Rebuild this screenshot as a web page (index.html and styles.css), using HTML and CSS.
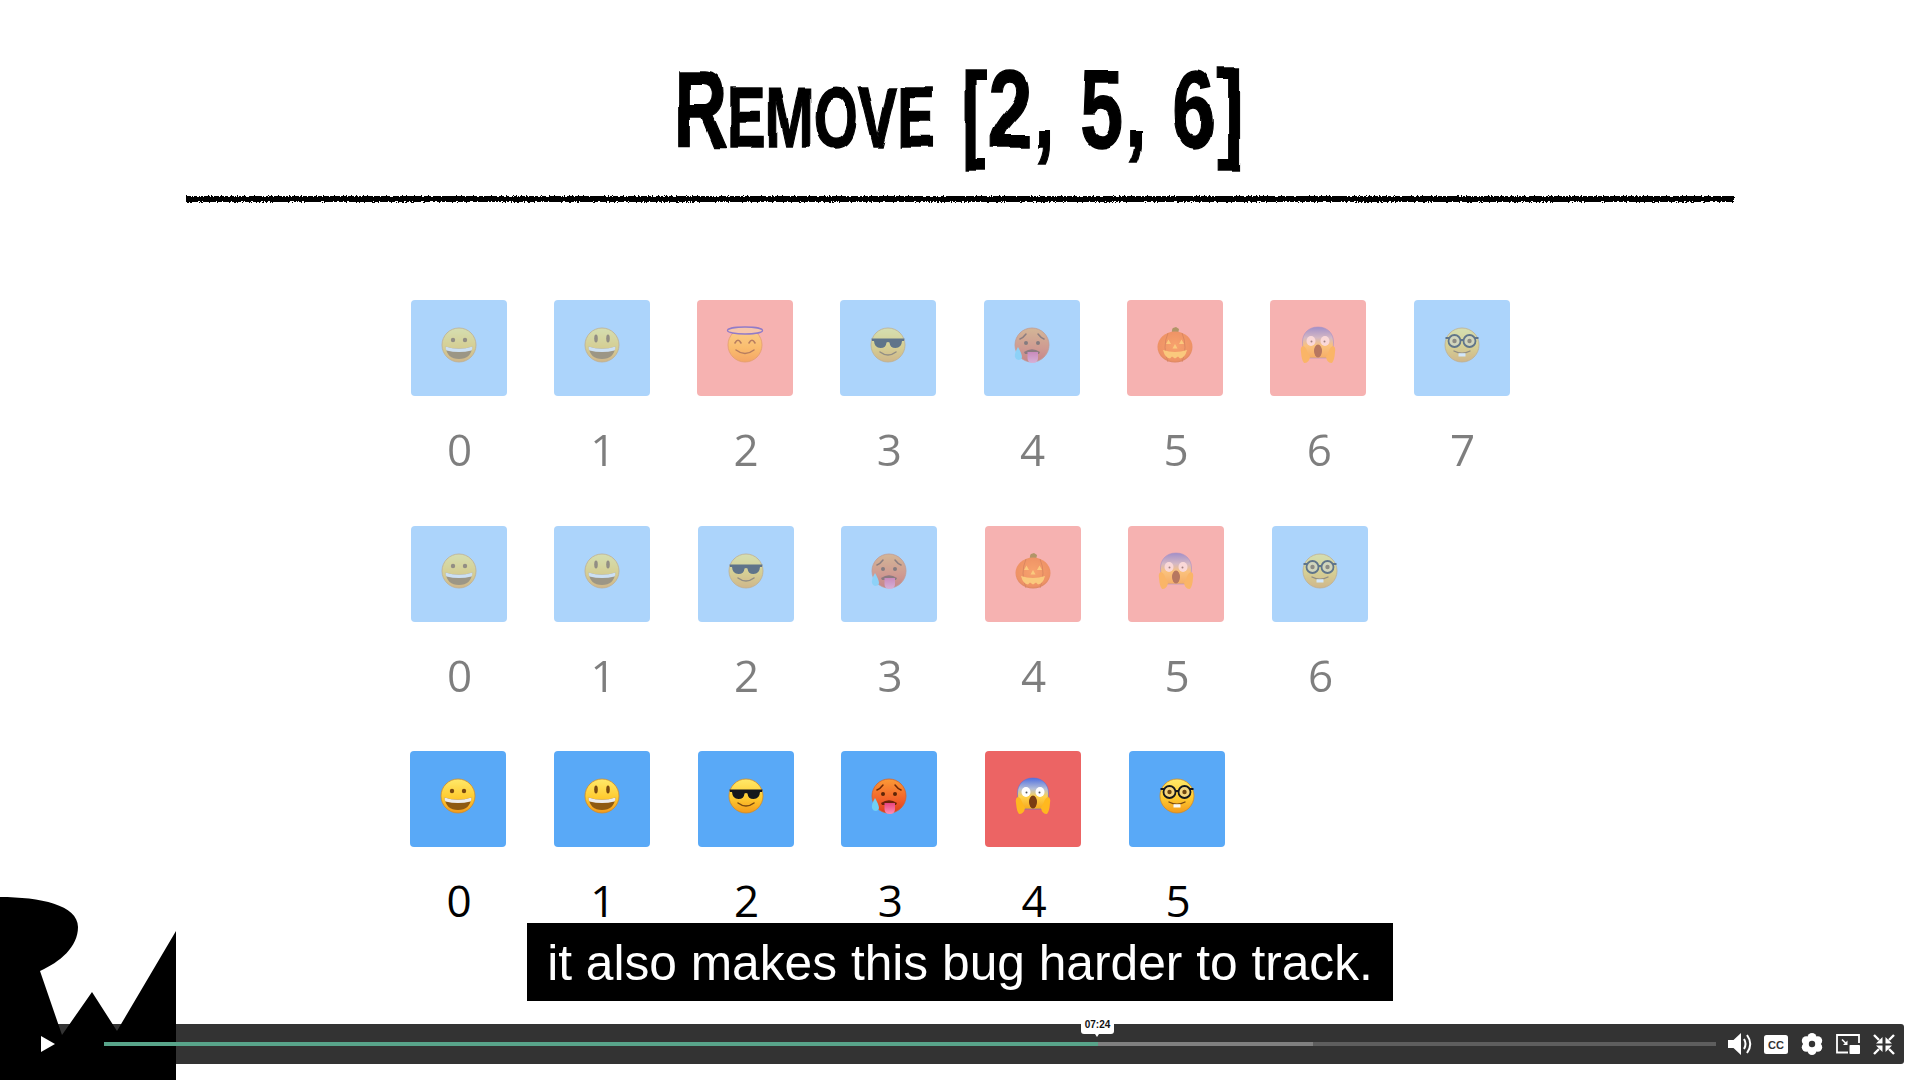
FILE: index.html
```html
<!DOCTYPE html>
<html lang="en">
<head>
<meta charset="utf-8">
<title>Remove [2, 5, 6]</title>
<link rel="stylesheet" href="styles.css">
</head>
<body>
<svg class="defs" aria-hidden="true">
  <defs>
    <filter id="wobble" x="-5%" y="-10%" width="110%" height="120%">
      <feTurbulence type="fractalNoise" baseFrequency="0.02" numOctaves="1" seed="4"/>
      <feDisplacementMap in="SourceGraphic" scale="7"/>
      <feGaussianBlur stdDeviation="0.6"/>
    </filter>
    <filter id="rough" x="-1%" y="-100%" width="102%" height="300%">
      <feTurbulence type="fractalNoise" baseFrequency="0.6" numOctaves="2" seed="7"/>
      <feDisplacementMap in="SourceGraphic" scale="4"/>
    </filter>
    <linearGradient id="gFace" x1="0" y1="0" x2="0" y2="1">
      <stop offset="0" stop-color="#ffe96a"/><stop offset=".55" stop-color="#ffcb30"/><stop offset="1" stop-color="#f39a1c"/>
    </linearGradient>
    <linearGradient id="gHot" x1="0" y1="0" x2="0" y2="1">
      <stop offset="0" stop-color="#fb9a35"/><stop offset=".6" stop-color="#f2622a"/><stop offset="1" stop-color="#dd3a1c"/>
    </linearGradient>
    <linearGradient id="gScream" x1="0" y1="0" x2="0" y2="1">
      <stop offset="0" stop-color="#4f6fe0"/><stop offset=".35" stop-color="#b5bfd8"/><stop offset=".6" stop-color="#ffd24a"/><stop offset="1" stop-color="#f6a91f"/>
    </linearGradient>
    <radialGradient id="gPump" cx=".5" cy=".45" r=".6">
      <stop offset="0" stop-color="#f9942c"/><stop offset=".8" stop-color="#e8741c"/><stop offset="1" stop-color="#a84e16"/>
    </radialGradient>
    <linearGradient id="gTongue" x1="0" y1="0" x2="0" y2="1">
      <stop offset="0" stop-color="#e8447f"/><stop offset="1" stop-color="#ff8fb5"/>
    </linearGradient>

    <circle id="fc" cx="18" cy="18" r="17" fill="url(#gFace)" stroke="#cf8a2a" stroke-width=".8"/>
    <g id="e-grin">
      <use href="#fc"/>
      <circle cx="12" cy="13" r="2.2" fill="#7a4a10"/><circle cx="24" cy="13" r="2.2" fill="#7a4a10"/>
      <path d="M4.500 19.500Q18 24 31.500 19.500Q30 32 18 32Q6 32 4.500 19.500Z" fill="#8e5a12"/>
      <path d="M4.500 19.500Q18 24 31.500 19.500Q31.500 22 30.500 23.500Q18 26.500 5.500 23.500Q4.500 22 4.500 19.500Z" fill="#ececec"/>
    </g>
    <g id="e-smile">
      <use href="#fc"/>
      <ellipse cx="12" cy="11.500" rx="1.800" ry="4" fill="#7a4a10"/><ellipse cx="24" cy="11.500" rx="1.800" ry="4" fill="#7a4a10"/>
      <path d="M4.500 19.500Q18 24 31.500 19.500Q30 32 18 32Q6 32 4.500 19.500Z" fill="#8e5a12"/>
      <path d="M4.500 19.500Q18 24 31.500 19.500Q31.500 22 30.500 23.500Q18 26.500 5.500 23.500Q4.500 22 4.500 19.500Z" fill="#ececec"/>
    </g>
    <g id="e-halo">
      <use href="#fc"/>
      <ellipse cx="18" cy="3.500" rx="17.500" ry="3.500" fill="#f6d9a8" stroke="#2f45e0" stroke-width="1.400"/>
      <path d="M8 16Q11 10.500 14 16M22 16Q25 10.500 28 16" fill="none" stroke="#7a4a10" stroke-width="1.600" stroke-linecap="round"/>
      <path d="M9 23Q18 30 27 23" fill="none" stroke="#7a4a10" stroke-width="1.500" stroke-linecap="round"/>
    </g>
    <g id="e-cool">
      <use href="#fc"/>
      <path d="M1.500 11.500H34.500L34 14H32Q31.500 21 25.500 21Q20 21 19.500 15.500Q18 14.500 16.500 15.500Q16 21 10.500 21Q4.500 21 4 14H2Z" fill="#15171c"/>
      <path d="M10 25Q18 31 26 25" fill="none" stroke="#7a4a10" stroke-width="1.500" stroke-linecap="round"/>
    </g>
    <g id="e-hot">
      <circle cx="18" cy="18" r="17" fill="url(#gHot)" stroke="#d4622c" stroke-width=".8"/>
      <path d="M6 12Q9 11 12 7M30 12Q27 11 24 7" fill="none" stroke="#6e2a08" stroke-width="1.500" stroke-linecap="round"/>
      <circle cx="12" cy="16" r="2" fill="#5e2506"/><circle cx="24" cy="16" r="2" fill="#5e2506"/>
      <path d="M10 25Q18 19.500 26 25L25 27H11Z" fill="#6e2208"/>
      <path d="M13.500 25H24V31Q24 36 18.800 36Q13.500 36 13.500 31Z" fill="url(#gTongue)"/>
      <path d="M4 20Q0 27 1 30Q2 33 4.500 33Q7.500 33 8 30Q8 27 4 20Z" fill="#6fd0f5"/>
    </g>
    <g id="e-pump">
      <path d="M15 7Q14.500 2 16 1L19 0L22 2L21 7Z" fill="#6f7a20"/>
      <ellipse cx="18" cy="20" rx="17.500" ry="15.500" fill="url(#gPump)"/>
      <path d="M11 6Q5 20 11 35M25 6Q31 20 25 35" fill="none" stroke="#b5540f" stroke-width=".8"/>
      <path d="M9 17L11.500 12.500L14 17ZM22 17L24.500 12.500L27 17ZM18 17L20.500 21.500H15.500Z" fill="#ffe04a"/>
      <path d="M6 23Q18 27 30 23Q28 31 23 31.500L21 29.500L18 31.500L15 29.500L13 31.500Q8 31 6 23Z" fill="#ffe04a"/>
    </g>
    <g id="e-scream">
      <path d="M18 0C8 0 2.500 7 2.500 15C2.500 22 4 27 7 31H29C32 27 33.500 22 33.500 15C33.500 7 28 0 18 0Z" fill="url(#gScream)" stroke="#5d6fd8" stroke-width=".6"/>
      <ellipse cx="11" cy="14" rx="4.500" ry="5" fill="#fff"/><ellipse cx="25" cy="14" rx="4.500" ry="5" fill="#fff"/>
      <circle cx="11.500" cy="14.500" r="1" fill="#555"/><circle cx="24.500" cy="14.500" r="1" fill="#555"/>
      <ellipse cx="18" cy="24" rx="4" ry="6.500" fill="#7a3d12"/>
      <path d="M1 25Q0 20 3 19Q6 20 7 24L10 30Q9 36 4 36Q1.500 33 1 25Z" fill="#ffb81f"/>
      <path d="M35 25Q36 20 33 19Q30 20 29 24L26 30Q27 36 32 36Q34.500 33 35 25Z" fill="#ffb81f"/>
    </g>
    <g id="e-nerd">
      <use href="#fc"/>
      <circle cx="10.500" cy="14" r="6" fill="#f6d67e" stroke="#16181c" stroke-width="1.800"/>
      <circle cx="25.500" cy="14" r="6" fill="#f6d67e" stroke="#16181c" stroke-width="1.800"/>
      <path d="M1.500 11H5M31 11H34.500M16.500 13H19.500" stroke="#16181c" stroke-width="1.800" fill="none"/>
      <circle cx="10.500" cy="14" r="2.200" fill="#6e4510"/><circle cx="25.500" cy="14" r="2.200" fill="#6e4510"/>
      <path d="M10 24Q18 28.500 26 24" fill="none" stroke="#7a4a10" stroke-width="1.400" stroke-linecap="round"/>
      <path d="M14.500 26.200H21.500V29.500H14.500Z" fill="#fafafa"/>
    </g>
  </defs>
</svg>

<main class="slide">
  <header class="head">
    <h1 class="title"><span class="low-wrap">R<span class="low">emove</span></span> <span class="nums">[2, 5, 6]</span></h1>
    <div class="rule"></div>
  </header>

  <section class="rows">
    <div class="row row-a faded">
      <div class="item"><div class="tile blue"><svg class="emoji" viewBox="0 0 36 36"><use href="#e-grin"/></svg></div><div class="num">0</div></div>
      <div class="item"><div class="tile blue"><svg class="emoji" viewBox="0 0 36 36"><use href="#e-smile"/></svg></div><div class="num">1</div></div>
      <div class="item"><div class="tile red"><svg class="emoji" viewBox="0 0 36 36"><use href="#e-halo"/></svg></div><div class="num">2</div></div>
      <div class="item"><div class="tile blue"><svg class="emoji" viewBox="0 0 36 36"><use href="#e-cool"/></svg></div><div class="num">3</div></div>
      <div class="item"><div class="tile blue"><svg class="emoji" viewBox="0 0 36 36"><use href="#e-hot"/></svg></div><div class="num">4</div></div>
      <div class="item"><div class="tile red"><svg class="emoji" viewBox="0 0 36 36"><use href="#e-pump"/></svg></div><div class="num">5</div></div>
      <div class="item"><div class="tile red"><svg class="emoji" viewBox="0 0 36 36"><use href="#e-scream"/></svg></div><div class="num">6</div></div>
      <div class="item"><div class="tile blue"><svg class="emoji" viewBox="0 0 36 36"><use href="#e-nerd"/></svg></div><div class="num">7</div></div>
    </div>
    <div class="row row-b faded">
      <div class="item"><div class="tile blue"><svg class="emoji" viewBox="0 0 36 36"><use href="#e-grin"/></svg></div><div class="num">0</div></div>
      <div class="item"><div class="tile blue"><svg class="emoji" viewBox="0 0 36 36"><use href="#e-smile"/></svg></div><div class="num">1</div></div>
      <div class="item"><div class="tile blue"><svg class="emoji" viewBox="0 0 36 36"><use href="#e-cool"/></svg></div><div class="num">2</div></div>
      <div class="item"><div class="tile blue"><svg class="emoji" viewBox="0 0 36 36"><use href="#e-hot"/></svg></div><div class="num">3</div></div>
      <div class="item"><div class="tile red"><svg class="emoji" viewBox="0 0 36 36"><use href="#e-pump"/></svg></div><div class="num">4</div></div>
      <div class="item"><div class="tile red"><svg class="emoji" viewBox="0 0 36 36"><use href="#e-scream"/></svg></div><div class="num">5</div></div>
      <div class="item"><div class="tile blue"><svg class="emoji" viewBox="0 0 36 36"><use href="#e-nerd"/></svg></div><div class="num">6</div></div>
    </div>
    <div class="row row-c">
      <div class="item"><div class="tile blue"><svg class="emoji" viewBox="0 0 36 36"><use href="#e-grin"/></svg></div><div class="num">0</div></div>
      <div class="item"><div class="tile blue"><svg class="emoji" viewBox="0 0 36 36"><use href="#e-smile"/></svg></div><div class="num">1</div></div>
      <div class="item"><div class="tile blue"><svg class="emoji" viewBox="0 0 36 36"><use href="#e-cool"/></svg></div><div class="num">2</div></div>
      <div class="item"><div class="tile blue"><svg class="emoji" viewBox="0 0 36 36"><use href="#e-hot"/></svg></div><div class="num">3</div></div>
      <div class="item"><div class="tile red"><svg class="emoji" viewBox="0 0 36 36"><use href="#e-scream"/></svg></div><div class="num">4</div></div>
      <div class="item"><div class="tile blue"><svg class="emoji" viewBox="0 0 36 36"><use href="#e-nerd"/></svg></div><div class="num">5</div></div>
    </div>
  </section>

  <svg class="logo" viewBox="0 0 176 183" aria-hidden="true">
    <path d="M0 0C40 0 78 8 78 30C78 50 60 65 40 74L62 138L92 95L117 134L176 34V183H0Z"/>
  </svg>

  <p class="caption">it also makes this bug harder to track.</p>

  <div class="player">
    <button class="play" aria-label="Play"></button>
    <div class="track">
      <div class="buffered"></div>
      <div class="played"></div>
      <div class="tip">07:24</div>
    </div>
    <div class="icons">
      <svg class="ic ic-vol" viewBox="0 0 24 22"><path d="M0 7H5.500L13 0V22L5.500 15H0Z" fill="#fff"/><path d="M16 6Q19 11 16 16M19 2Q25.500 11 19 20" fill="none" stroke="#fff" stroke-width="2"/></svg>
      <svg class="ic ic-cc" viewBox="0 0 24 19"><rect width="24" height="19" rx="2.500" fill="#fff"/><text x="12" y="13.500" text-anchor="middle" class="cc-text">CC</text></svg>
      <svg class="ic ic-gear" viewBox="0 0 22 22"><g fill="#fff"><circle cx="11" cy="4.500" r="4.500"/><circle cx="11" cy="17.500" r="4.500"/><circle cx="5.300" cy="7.800" r="4.500"/><circle cx="16.700" cy="7.800" r="4.500"/><circle cx="5.300" cy="14.200" r="4.500"/><circle cx="16.700" cy="14.200" r="4.500"/></g><circle cx="11" cy="11" r="3.200" fill="#333"/></svg>
      <svg class="ic ic-pip" viewBox="0 0 24 20"><path d="M12 18.500H1V1H23V9" fill="none" stroke="#fff" stroke-width="1.800"/><rect x="13.500" y="11" width="10.500" height="9" rx=".8" fill="#fff"/><path d="M6 5.500L10 9.500" stroke="#fff" stroke-width="1.600"/><path d="M11.500 6.500V11H7Z" fill="#fff"/></svg>
      <svg class="ic ic-col" viewBox="0 0 22 21"><g fill="#fff"><path d="M9.500 9.500V3L3 9.500ZM12.500 9.500V3L19 9.500ZM9.500 11.500V18L3 11.500ZM12.500 11.500V18L19 11.500Z"/></g><path d="M1 1L6 6M21 1L16 6M1 20L6 15M21 20L16 15" stroke="#fff" stroke-width="2.400"/></svg>
    </div>
  </div>
</main>
</body>
</html>
```
FILE: styles.css
```css
html, body {
  margin: 0;
  padding: 0;
  background: #fff;
}

.defs {
  display: block;
  width: 0;
  height: 0;
}

.slide {
  position: relative;
  width: 1920px;
  height: 1080px;
  overflow: hidden;
  background: #fff;
  font-family: "Open Sans", sans-serif;
}

.head {
  display: flex;
  flex-direction: column;
  align-items: center;
  padding-top: 44px;
}

.title {
  margin: 0 12px 0 0;
  height: 152px;
  font-family: "Liberation Sans", sans-serif;
  font-size: 110px;
  font-weight: 700;
  line-height: 130px;
  color: #000;
  white-space: pre;
  word-spacing: 5px;
  -webkit-text-stroke: 1.5px #000;
  transform: scaleX(0.7);
  filter: url(#wobble);
}

.low-wrap {
  display: inline-block;
  transform: scaleX(0.96);
  transform-origin: right center;
}

.low {
  font-size: 86px;
  text-transform: uppercase;
}

.nums {
  word-spacing: 0;
  letter-spacing: 3px;
}

.rule {
  width: 1548px;
  height: 6px;
  background: #000;
  filter: url(#rough);
}

.rows {
  display: flex;
  flex-direction: column;
  gap: 46.5px;
  padding-top: 98px;
}

.row {
  display: flex;
}

.row-a {
  gap: 47.3px;
  padding-left: 410.5px;
}

.row-b {
  gap: 47.5px;
  padding-left: 410.5px;
}

.row-c {
  gap: 47.8px;
  padding-left: 410px;
}

.item {
  display: flex;
  flex-direction: column;
  align-items: center;
  width: 96px;
}

.tile {
  display: flex;
  align-items: center;
  justify-content: center;
  width: 96px;
  height: 96px;
  border-radius: 4px;
}

.blue {
  background: #59a9f7;
}

.red {
  background: #ec6464;
}

.faded .blue {
  background: #acd4fb;
}

.faded .red {
  background: #f6b2b1;
}

.faded .emoji,
.faded .num {
  opacity: 0.5;
}

.emoji {
  width: 36px;
  height: 36px;
  margin-bottom: 6px;
  overflow: visible;
}

.num {
  margin-top: 23px;
  padding-left: 2px;
  height: 60px;
  font-size: 44px;
  line-height: 60px;
  color: #000;
}

.logo {
  position: absolute;
  left: 0;
  top: 897px;
  width: 176px;
  height: 183px;
  fill: #000;
}

.caption {
  position: absolute;
  left: 527px;
  top: 923px;
  margin: 0;
  width: 866px;
  height: 78px;
  background: #000;
  color: #fff;
  font-family: "Liberation Sans", Arial, sans-serif;
  font-size: 49.7px;
  line-height: 81px;
  text-align: center;
  white-space: nowrap;
}

.player {
  position: absolute;
  left: 16px;
  top: 1024px;
  width: 1888px;
  height: 40px;
  display: flex;
  align-items: center;
  background: rgba(0, 0, 0, 0.8);
  border-radius: 3px;
}

.play {
  flex: none;
  width: 0;
  height: 0;
  margin-left: 25px;
  padding: 0;
  background: none;
  border-style: solid;
  border-width: 8px 0 8px 14px;
  border-color: transparent transparent transparent #fff;
}

.track {
  position: relative;
  flex: 1;
  height: 4px;
  margin-left: 49px;
  margin-right: 12px;
  background: #5e5e5e;
}

.buffered,
.played {
  position: absolute;
  left: 0;
  top: 0;
  height: 4px;
}

.buffered {
  width: 1209px;
  background: #808080;
}

.played {
  width: 994px;
  background: #58a48a;
}

.tip {
  position: absolute;
  left: 977px;
  top: -23px;
  width: 33px;
  height: 15px;
  background: #fff;
  border-radius: 3px;
  color: #111;
  font-family: "Liberation Sans", Arial, sans-serif;
  font-size: 10px;
  font-weight: 700;
  line-height: 12px;
  text-align: center;
}

.tip::after {
  content: "";
  position: absolute;
  left: 14px;
  top: 15px;
  border-style: solid;
  border-width: 3px 2.5px 0 2.5px;
  border-color: #fff transparent transparent transparent;
}

.icons {
  display: flex;
  align-items: center;
  gap: 13px;
  padding-right: 9px;
}

.ic {
  display: block;
  flex: none;
}

.ic-vol {
  width: 24px;
  height: 22px;
  margin-right: -1px;
}

.ic-cc {
  width: 24px;
  height: 19px;
}

.ic-gear {
  width: 22px;
  height: 22px;
}

.ic-pip {
  width: 24px;
  height: 20px;
}

.ic-col {
  width: 22px;
  height: 21px;
}

.cc-text {
  font-family: "Liberation Sans", Arial, sans-serif;
  font-size: 11px;
  font-weight: 700;
  fill: #333;
}
```
